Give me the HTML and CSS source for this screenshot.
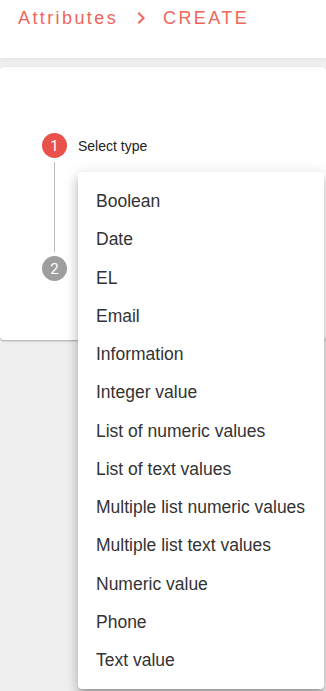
FILE: index.html
```html
<!DOCTYPE html>
<html>
<head>
<meta charset="utf-8">
<link rel="stylesheet" href="styles.css">
</head>
<body>
<header class="topbar">
  <span class="crumb">Attributes</span>
  <svg class="chev" width="24" height="24" viewBox="0 0 24 24"><path d="M10 6L8.59 7.41 13.17 12l-4.58 4.59L10 18l6-6z" fill="#f0655a"/></svg>
  <span class="crumb">CREATE</span>
</header>
<main class="content">
  <section class="card">
    <div class="step">
      <div class="icon active">1</div>
      <div class="label">Select type</div>
    </div>
    <div class="connector"><span></span></div>
    <div class="step">
      <div class="icon">2</div>
    </div>
  </section>
</main>
<ul class="menu">
  <li>Boolean</li>
  <li>Date</li>
  <li>EL</li>
  <li>Email</li>
  <li>Information</li>
  <li>Integer value</li>
  <li>List of numeric values</li>
  <li>List of text values</li>
  <li>Multiple list numeric values</li>
  <li>Multiple list text values</li>
  <li>Numeric value</li>
  <li>Phone</li>
  <li>Text value</li>
</ul>
</body>
</html>
```
FILE: styles.css
```css
html, body {
  margin: 0;
  padding: 0;
}
body {
  background: #f0f0f0;
  font-family: "Liberation Sans", Arial, sans-serif;
  width: 326px;
  height: 691px;
  overflow: hidden;
  position: relative;
}
.topbar {
  height: 58px;
  background: #fff;
  display: flex;
  align-items: flex-start;
  padding: 6px 0 0 18px;
  box-sizing: border-box;
  box-shadow: 0 1px 6px rgba(0,0,0,0.06);
  position: relative;
}
.crumb {
  font-family: "Liberation Sans", Arial, sans-serif;
  font-size: 18px;
  letter-spacing: 2.4px;
  color: #f0655a;
  line-height: 24px;
}
.chev {
  margin: 0 10px 0 11px;
}
.content {
  padding-top: 9px;
}
.card {
  background: #fff;
  border-radius: 4px;
  box-shadow: 0 1px 3px rgba(0,0,0,0.2), 0 1px 1px rgba(0,0,0,0.12);
  height: 273px;
  padding: 66px 0 0 42px;
  box-sizing: border-box;
}
.step {
  display: flex;
  align-items: center;
}
.icon {
  width: 25px;
  height: 25px;
  border-radius: 50%;
  background: #9e9e9e;
  color: #fff;
  font-family: Roboto, "Liberation Sans", sans-serif;
  font-size: 15px;
  display: flex;
  align-items: center;
  justify-content: center;
}
.icon.active {
  background: #e8524a;
}
.label {
  margin-left: 11px;
  margin-top: 1px;
  font-size: 14px;
  color: #222;
}
.connector {
  padding: 4px 0 4px 12px;
}
.connector span {
  display: block;
  width: 1px;
  height: 90px;
  background: #bdbdbd;
}
.menu {
  position: absolute;
  left: 78px;
  top: 172px;
  width: 246px;
  margin: 0;
  padding: 10px 0 0;
  height: 517px;
  box-sizing: border-box;
  list-style: none;
  background: #fff;
  border-radius: 4px;
  box-shadow: 0 5px 5px -3px rgba(0,0,0,0.2), 0 8px 10px 1px rgba(0,0,0,0.14), 0 3px 14px 2px rgba(0,0,0,0.12);
}
.menu li {
  height: 38.25px;
  line-height: 38.25px;
  padding-left: 18px;
  font-size: 17.5px;
  color: #333;
  white-space: nowrap;
}
```
